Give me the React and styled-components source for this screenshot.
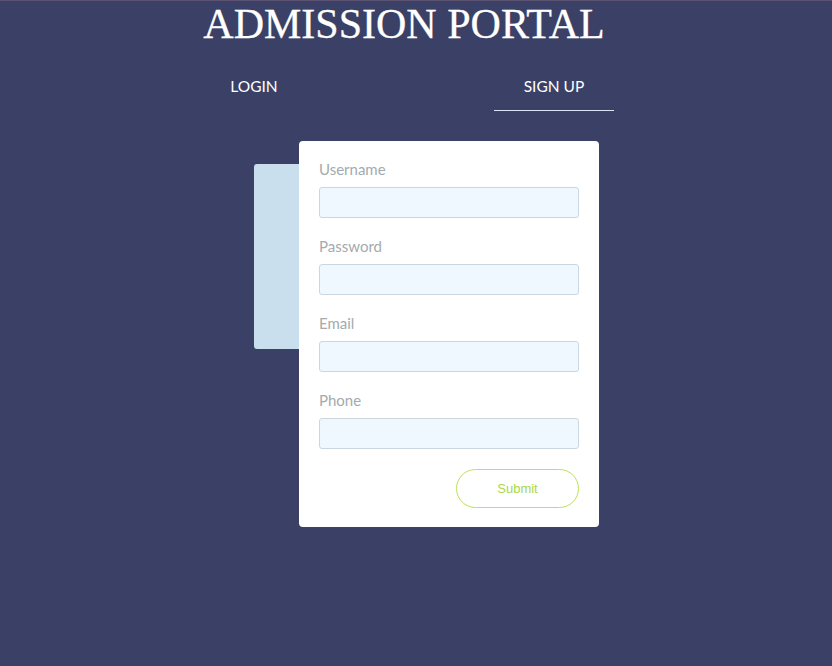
import React, { useState } from 'react';
import styled, { createGlobalStyle } from 'styled-components';

const GlobalStyle = createGlobalStyle`
  html, body {
    margin: 0;
    padding: 0;
    background: #3b4166;
  }
  body {
    border-top: 1px solid #5a5270;
    font-family: Lato, 'Liberation Sans', sans-serif;
  }
`;

const Page = styled.div`
  min-height: calc(100vh - 1px);
  width: 808px;
  display: flex;
  flex-direction: column;
  align-items: center;
`;

const Title = styled.h1`
  margin: 0;
  font-family: 'Liberation Serif', serif;
  font-weight: 400;
  font-size: 42px;
  line-height: 46px;
  color: #ffffff;
  -webkit-text-stroke: 0.3px #ffffff;
`;

const TabRow = styled.div`
  display: flex;
  gap: 180px;
  margin-top: 15px;
`;

const Tab = styled.button`
  width: 120px;
  padding: 14px 0 14px;
  background: none;
  border: none;
  border-bottom: 1px solid ${(p) => (p.$active ? '#d6e4f5' : 'transparent')};
  font-family: Lato, 'Liberation Sans', sans-serif;
  font-size: 15.5px;
  line-height: 20px;
  color: #ffffff;
  text-transform: uppercase;
  cursor: pointer;
`;

const Stage = styled.div`
  width: 420px;
  box-sizing: border-box;
  padding-left: 60px;
  margin-top: 30px;
  display: flex;
  align-items: flex-start;
`;

const BackPanel = styled.div`
  flex: 0 0 300px;
  height: 185px;
  margin-top: 23px;
  background: #c9dfee;
  border-radius: 3px;
`;

const Card = styled.form`
  position: relative;
  z-index: 1;
  flex: 0 0 300px;
  margin-left: -255px;
  box-sizing: border-box;
  padding: 19px 20px 19px;
  background: #ffffff;
  border-radius: 4px;
  display: flex;
  flex-direction: column;
`;

const Field = styled.div`
  display: flex;
  flex-direction: column;
  & + & {
    margin-top: 19px;
  }
`;

const Label = styled.label`
  font-size: 15px;
  line-height: 18px;
  color: #a3abae;
  margin-bottom: 9px;
`;

const Input = styled.input`
  height: 31px;
  box-sizing: border-box;
  border: 1px solid #cad6e0;
  border-radius: 3px;
  background: #eef8fe;
  outline: none;
  padding: 0 8px;
  font-family: Lato, 'Liberation Sans', sans-serif;
  font-size: 14px;
`;

const Actions = styled.div`
  display: flex;
  justify-content: flex-end;
  margin-top: 20px;
`;

const SubmitButton = styled.button`
  width: 123px;
  height: 39px;
  border: 1px solid #bde355;
  border-radius: 20px;
  background: #ffffff;
  font-family: 'Liberation Sans', Arial, sans-serif;
  font-size: 13px;
  color: #a7d84c;
  cursor: pointer;
`;

const fields = ['Username', 'Password', 'Email', 'Phone'];

export default function App() {
  const [tab, setTab] = useState('signup');
  return (
    <>
      <GlobalStyle />
      <Page>
        <Title>ADMISSION PORTAL</Title>
        <TabRow>
          <Tab $active={tab === 'login'} onClick={() => setTab('login')}>Login</Tab>
          <Tab $active={tab === 'signup'} onClick={() => setTab('signup')}>Sign up</Tab>
        </TabRow>
        <Stage>
          <BackPanel />
          <Card onSubmit={(e) => e.preventDefault()}>
            {fields.map((f) => (
              <Field key={f}>
                <Label>{f}</Label>
                <Input type={f === 'Password' ? 'password' : 'text'} />
              </Field>
            ))}
            <Actions>
              <SubmitButton type="submit">Submit</SubmitButton>
            </Actions>
          </Card>
        </Stage>
      </Page>
    </>
  );
}
